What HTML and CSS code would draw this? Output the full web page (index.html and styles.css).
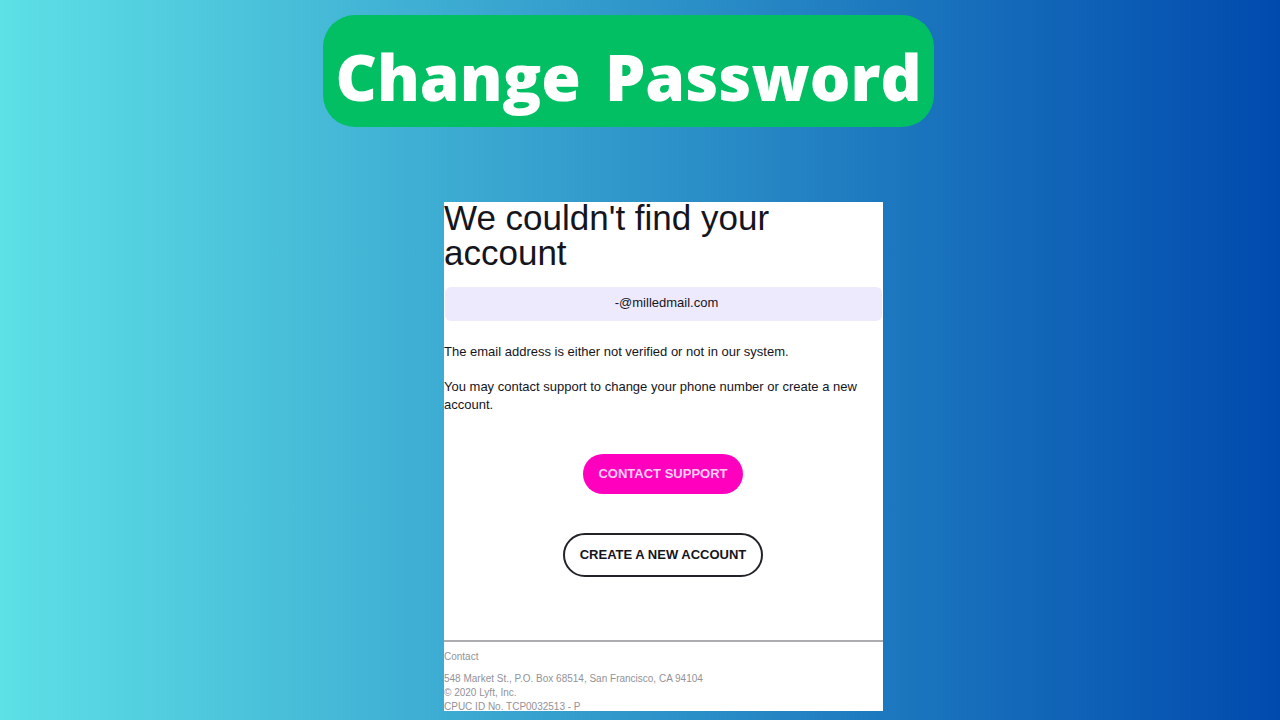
FILE: index.html
```html
<!DOCTYPE html>
<html lang="en">
<head>
<meta charset="utf-8">
<meta name="viewport" content="width=device-width, initial-scale=1">
<title>Change Password</title>
<link rel="stylesheet" href="styles.css">
</head>
<body>
<header class="page-header">
  <h1 class="banner"><span>Change</span> <span>Password</span></h1>
</header>
<main class="page-main">
  <section class="card">
    <h2 class="card-title">We couldn't find your account</h2>
    <p class="email">-@milledmail.com</p>
    <p class="text">The email address is either not verified or not in our system.</p>
    <p class="text">You may contact support to change your phone number or create a new account.</p>
    <div class="actions">
      <button type="button" class="button button-primary">CONTACT SUPPORT</button>
      <button type="button" class="button button-outline">CREATE A NEW ACCOUNT</button>
    </div>
    <footer class="card-footer">
      <a class="contact" href="#contact">Contact</a>
      <address class="address">548 Market St., P.O. Box 68514, San Francisco, CA 94104<br>© 2020 Lyft, Inc.<br>CPUC ID No. TCP0032513 - P</address>
    </footer>
  </section>
</main>
</body>
</html>
```
FILE: styles.css
```css
* {
  box-sizing: border-box;
}

body {
  margin: 0;
  min-height: 100vh;
  padding: 15px 0 9px;
  background: linear-gradient(90deg, #5de0e6, #004aad);
  font-family: "Liberation Sans", Arial, sans-serif;
  color: #15151c;
}

.page-header {
  display: flex;
  justify-content: center;
  padding-right: 23px;
}

.banner {
  display: flex;
  flex-wrap: wrap;
  gap: 0 24px;
  margin: 0;
  padding: 22px 12px 10px;
  border-radius: 32px;
  background: #03bf63;
  color: #fff;
  font-family: "Open Sans", "Noto Sans", sans-serif;
  font-size: 64px;
  font-weight: 800;
  line-height: 80px;
}

.page-main {
  display: flex;
  justify-content: center;
  padding: 75px 0 0 47px;
}

.card {
  width: 100%;
  max-width: 439px;
  background: #fff;
}

.card-title {
  margin: -2px 0 0;
  font-size: 35px;
  font-weight: 400;
  line-height: 35px;
}

.email {
  margin: 17px 1px 22px;
  padding: 7px 0 9px 6px;
  border-radius: 6px;
  background: #eeeafd;
  font-size: 13px;
  line-height: 18px;
  text-align: center;
}

.text {
  margin: 0 0 17px;
  font-size: 13px;
  line-height: 18px;
}

.actions {
  display: flex;
  flex-direction: column;
  align-items: center;
  gap: 39px;
  padding: 23px 1px 63px 0;
}

.button {
  border: 0;
  border-radius: 22px;
  padding: 0 15px;
  font: bold 13px/40px "Liberation Sans", Arial, sans-serif;
  cursor: pointer;
}

.button-primary {
  background: #ff00bf;
  color: #ffd0f4;
}

.button-outline {
  border: 2px solid #222228;
  background: #fff;
  color: #15151c;
}

.card-footer {
  display: flex;
  flex-direction: column;
  gap: 8px;
  margin-bottom: -3px;
  padding-top: 8px;
  border-top: 2px solid #adadb1;
  color: #929298;
  font-size: 10px;
  line-height: 14px;
}

.contact {
  color: inherit;
  text-decoration: none;
}

.address {
  font-style: normal;
}
```
